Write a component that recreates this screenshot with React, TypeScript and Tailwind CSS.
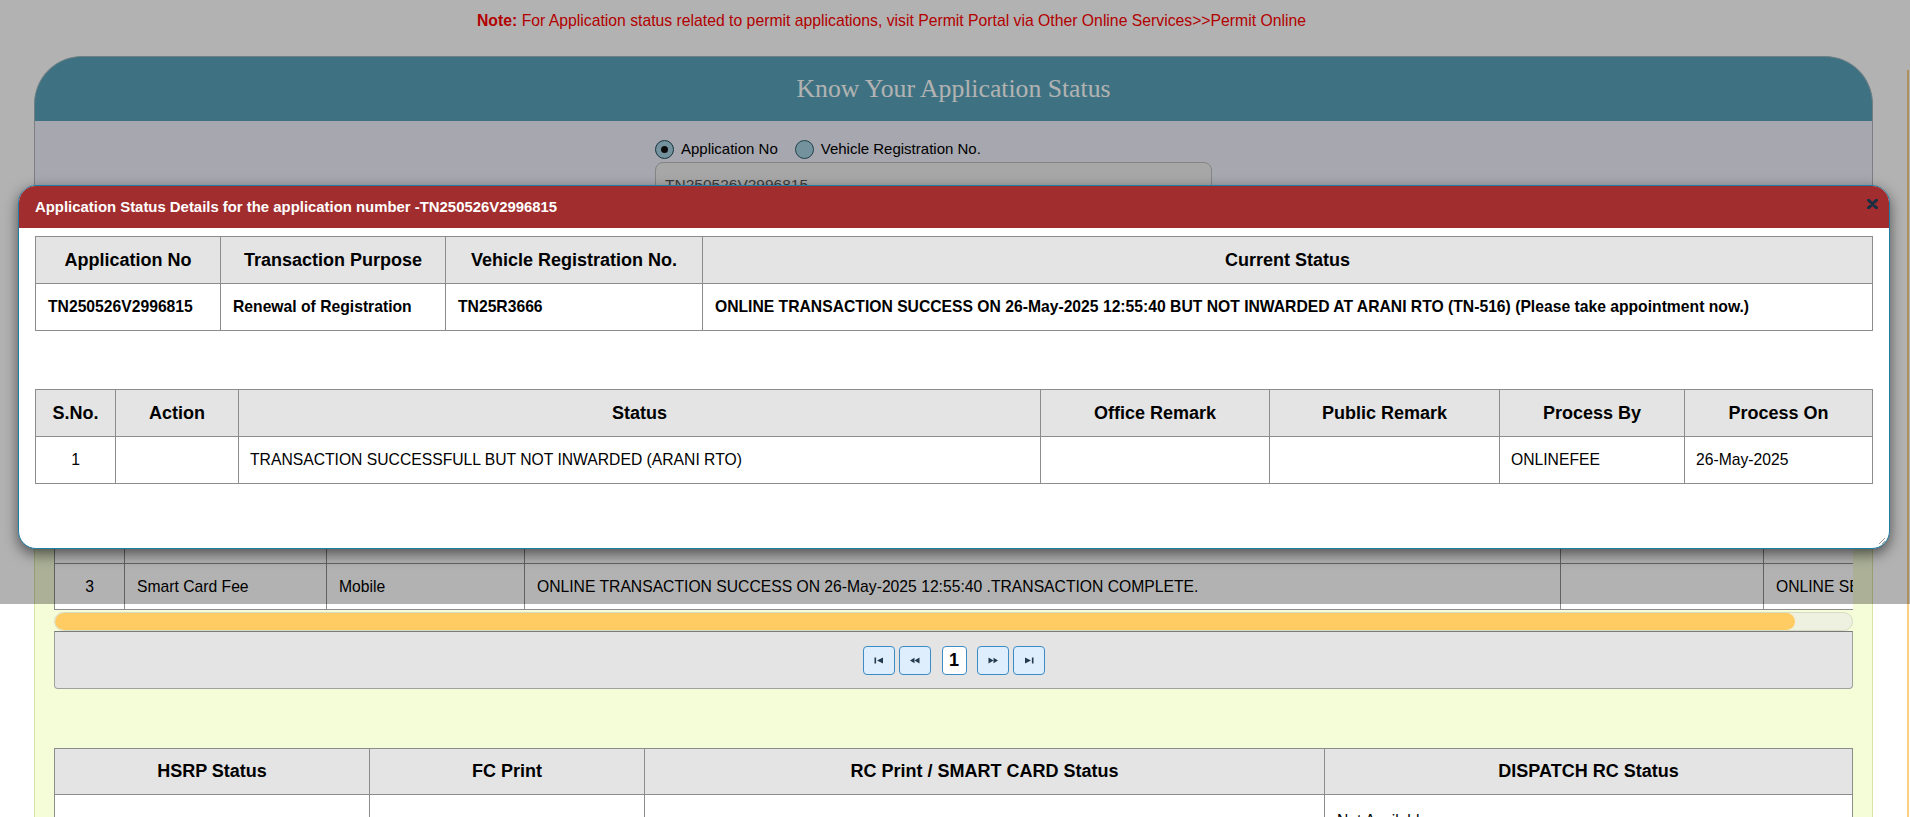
import React from 'react'

const summaryHead = ['Application No', 'Transaction Purpose', 'Vehicle Registration No.', 'Current Status']
const summaryRow = [
    'TN250526V2996815',
    'Renewal of Registration',
    'TN25R3666',
    'ONLINE TRANSACTION SUCCESS ON 26-May-2025 12:55:40 BUT NOT INWARDED AT ARANI RTO (TN-516) (Please take appointment now.)',
]

const historyHead = ['S.No.', 'Action', 'Status', 'Office Remark', 'Public Remark', 'Process By', 'Process On']

// rows 1 and 2 sit under the dialog, only row 3 shows
const feeRows = [
    ['', '', '', '', '', ''],
    ['', '', '', '', '', ''],
    ['3', 'Smart Card Fee', 'Mobile', 'ONLINE TRANSACTION SUCCESS ON 26-May-2025 12:55:40 .TRANSACTION COMPLETE.', '', 'ONLINE SERVICE'],
]

function PagerIcon({ kind }: { kind: 'first' | 'prev' | 'next' | 'last' }) {
    return (
        <svg width="10" height="7" viewBox="0 0 10 7" fill="#243a4e">
            {kind === 'first' && (
                <>
                    <rect x="0.5" y="0.5" width="1.6" height="6" />
                    <polygon points="3,3.5 9,0.5 9,6.5" />
                </>
            )}
            {kind === 'prev' && (
                <>
                    <polygon points="0,3.5 4.5,0.8 4.5,6.2" />
                    <polygon points="4.5,3.5 9.5,0.5 9.5,6.5" />
                </>
            )}
            {kind === 'next' && (
                <>
                    <polygon points="0.5,0.5 5.5,3.5 0.5,6.5" />
                    <polygon points="5.5,0.8 10,3.5 5.5,6.2" />
                </>
            )}
            {kind === 'last' && (
                <>
                    <polygon points="1,0.5 7,3.5 1,6.5" />
                    <rect x="7.9" y="0.5" width="1.6" height="6" />
                </>
            )}
        </svg>
    )
}

function PagerButton({ kind }: { kind: 'first' | 'prev' | 'next' | 'last' }) {
    return (
        <div className="w-[32px] h-[29px] rounded-[4px] border border-[#3b8bc6] bg-[#dfeefc] flex items-center justify-center">
            <PagerIcon kind={kind} />
        </div>
    )
}

export default function App() {
    return (
        <div className="relative w-[1910px] h-[817px] overflow-hidden bg-white font-['Liberation_Sans',Arial,sans-serif] text-black">
            {/* note line */}
            <div className="h-[42px] flex items-center pl-[477px] text-[15.75px] text-[#ff0000] whitespace-pre">
                <span className="font-bold">Note: </span>
                <span>For Application status related to permit applications, visit Permit Portal via Other Online Services&gt;&gt;Permit Online</span>
            </div>

            {/* main panel */}
            <div className="mt-[14px] ml-[34px] mr-[37px]">
                <div className="h-[65px] rounded-t-[48px] bg-[#59a4bb] border-t border-x border-[#9fb6bd] flex items-center justify-center">
                    <span className="font-['Liberation_Serif',serif] text-[25.7px] text-white">Know Your Application Status</span>
                </div>

                <div className="h-[139px] bg-[#eeeffb] border-x border-[#b4b4bc]">
                    <div className="ml-[620px] pt-[18px] w-[557px]">
                        <div className="flex items-center h-[20px] text-[15px]">
                            <span className="w-[19px] h-[19px] rounded-full border border-[#1f4a58] bg-[#a5d2e2] flex items-center justify-center">
                                <span className="w-[7px] h-[7px] rounded-full bg-[#111]" />
                            </span>
                            <span className="ml-[7px]">Application No</span>
                            <span className="ml-[17px] w-[19px] h-[19px] rounded-full border border-[#2f5d6b] bg-[#a5d2e2]" />
                            <span className="ml-[7px]">Vehicle Registration No.</span>
                        </div>
                        <div className="mt-[3px] h-[40px] rounded-[8px] border border-[#bdbdbd] bg-[#efefef] pl-[9px] pt-[10px] text-[15.5px] text-[#555]">
                            TN250526V2996815
                        </div>
                    </div>
                </div>

                <div className="bg-[#f5fcd8] border-x border-[#d6e4a4] px-[19px] pt-[165px] pb-[40px]">
                    <div className="w-full overflow-hidden">
                        <table className="w-[2010px] table-fixed border-collapse text-[15.7px]">
                            <colgroup>
                                <col className="w-[70px]" />
                                <col className="w-[202px]" />
                                <col className="w-[198px]" />
                                <col className="w-[1036px]" />
                                <col className="w-[203px]" />
                                <col className="w-[301px]" />
                            </colgroup>
                            <thead>
                                <tr>
                                    {[0, 1, 2, 3, 4, 5].map((h) => (
                                        <th key={h} className="h-[46px] border border-[#8c8c8c] bg-[#e4e4e4]" />
                                    ))}
                                </tr>
                            </thead>
                            <tbody>
                                {feeRows.map((r, ri) => (
                                    <tr key={ri}>
                                        {r.map((c, i) => (
                                            <td
                                                key={i}
                                                className={
                                                    i === 0
                                                        ? 'h-[46px] border border-[#8c8c8c] bg-white text-center'
                                                        : 'h-[46px] border border-[#8c8c8c] bg-white px-[12px] whitespace-nowrap overflow-hidden'
                                                }
                                            >
                                                {c}
                                            </td>
                                        ))}
                                    </tr>
                                ))}
                            </tbody>
                        </table>
                    </div>

                    {/* custom horizontal scrollbar */}
                    <div className="mt-[2px] h-[19px] rounded-full border border-[#d8dcc6] bg-[#eef1e0] overflow-hidden">
                        <div className="w-[1740px] h-full rounded-full bg-[#ffcb63]" />
                    </div>

                    {/* pager */}
                    <div className="h-[58px] rounded-b-[4px] border border-[#a0a0a0] border-t-[#7a7a7a] bg-[#e4e4e4] flex items-center justify-center">
                        <div className="flex items-center">
                            <PagerButton kind="first" />
                            <div className="ml-[4px]"><PagerButton kind="prev" /></div>
                            <div className="ml-[11px] w-[25px] h-[29px] rounded-[4px] border border-[#3b8bc6] bg-white flex items-center justify-center text-[18px] font-bold">1</div>
                            <div className="ml-[10px]"><PagerButton kind="next" /></div>
                            <div className="ml-[4px]"><PagerButton kind="last" /></div>
                        </div>
                    </div>

                    <table className="mt-[59px] w-full table-fixed border-collapse text-[15.7px]">
                        <colgroup>
                            <col className="w-[315px]" />
                            <col className="w-[275px]" />
                            <col className="w-[680px]" />
                            <col />
                        </colgroup>
                        <thead>
                            <tr>
                                {['HSRP Status', 'FC Print', 'RC Print / SMART CARD Status', 'DISPATCH RC Status'].map((h) => (
                                    <th key={h} className="h-[46px] border border-[#8c8c8c] bg-[#e4e4e4] text-[18px] font-bold">{h}</th>
                                ))}
                            </tr>
                        </thead>
                        <tbody>
                            <tr>
                                <td className="h-[60px] border border-[#8c8c8c] bg-white" />
                                <td className="h-[60px] border border-[#8c8c8c] bg-white" />
                                <td className="h-[60px] border border-[#8c8c8c] bg-white" />
                                <td className="h-[60px] border border-[#8c8c8c] bg-white px-[12px] align-top pt-[14px]">Not Available</td>
                            </tr>
                        </tbody>
                    </table>
                </div>
            </div>

            {/* thin orange edge on the right */}
            <div className="absolute right-[1px] top-[70px] bottom-0 w-[2px] bg-[#f9d084]" />

            {/* modal overlay */}
            <div className="absolute left-0 top-0 w-full h-[604px] bg-black/30" />

            {/* dialog */}
            <div className="absolute left-[18px] top-[185px] w-[1872px] h-[364px] rounded-[18px] border border-[#1d7ea6] bg-white shadow-[0_5px_14px_rgba(0,0,0,0.55)] overflow-hidden">
                <div className="relative h-[42px] bg-[#a12d2e] flex items-center pl-[16px] text-[14.9px] font-bold text-white">
                    Application Status Details for the application number -TN250526V2996815
                    <svg className="absolute right-[11px] top-[13px]" width="11" height="10" viewBox="0 0 11 10">
                        <path d="M1.5 1.2 L9.5 8.8 M9.5 1.2 L1.5 8.8" stroke="#1b2f42" strokeWidth="3" strokeLinecap="round" />
                    </svg>
                </div>

                <div className="px-[16px] pt-[8px]">
                    <table className="w-full table-fixed border-collapse">
                        <colgroup>
                            <col className="w-[185px]" />
                            <col className="w-[225px]" />
                            <col className="w-[257px]" />
                            <col />
                        </colgroup>
                        <thead>
                            <tr>
                                {summaryHead.map((h) => (
                                    <th key={h} className="h-[47px] border border-[#8c8c8c] bg-[#e4e4e4] text-[18px] font-bold">{h}</th>
                                ))}
                            </tr>
                        </thead>
                        <tbody>
                            <tr>
                                {summaryRow.map((c, i) => (
                                    <td key={i} className="h-[47px] border border-[#8c8c8c] px-[12px] text-[15.7px] font-bold whitespace-nowrap">{c}</td>
                                ))}
                            </tr>
                        </tbody>
                    </table>

                    <table className="mt-[58px] w-full table-fixed border-collapse">
                        <colgroup>
                            <col className="w-[80px]" />
                            <col className="w-[123px]" />
                            <col className="w-[802px]" />
                            <col className="w-[229px]" />
                            <col className="w-[230px]" />
                            <col className="w-[185px]" />
                            <col />
                        </colgroup>
                        <thead>
                            <tr>
                                {historyHead.map((h) => (
                                    <th key={h} className="h-[47px] border border-[#8c8c8c] bg-[#e4e4e4] text-[18px] font-bold">{h}</th>
                                ))}
                            </tr>
                        </thead>
                        <tbody>
                            <tr className="text-[15.7px]">
                                <td className="h-[47px] border border-[#8c8c8c] text-center">1</td>
                                <td className="h-[47px] border border-[#8c8c8c]" />
                                <td className="h-[47px] border border-[#8c8c8c] px-[11px]">TRANSACTION SUCCESSFULL BUT NOT INWARDED (ARANI RTO)</td>
                                <td className="h-[47px] border border-[#8c8c8c]" />
                                <td className="h-[47px] border border-[#8c8c8c]" />
                                <td className="h-[47px] border border-[#8c8c8c] px-[11px]">ONLINEFEE</td>
                                <td className="h-[47px] border border-[#8c8c8c] px-[11px]">26-May-2025</td>
                            </tr>
                        </tbody>
                    </table>
                </div>

                {/* resize grip */}
                <svg className="absolute right-[3px] bottom-[3px]" width="9" height="9" viewBox="0 0 9 9">
                    <path d="M8 2 L2 8 M8 5 L5 8" stroke="#9a9a9a" strokeWidth="1" />
                </svg>
            </div>
        </div>
    )
}
